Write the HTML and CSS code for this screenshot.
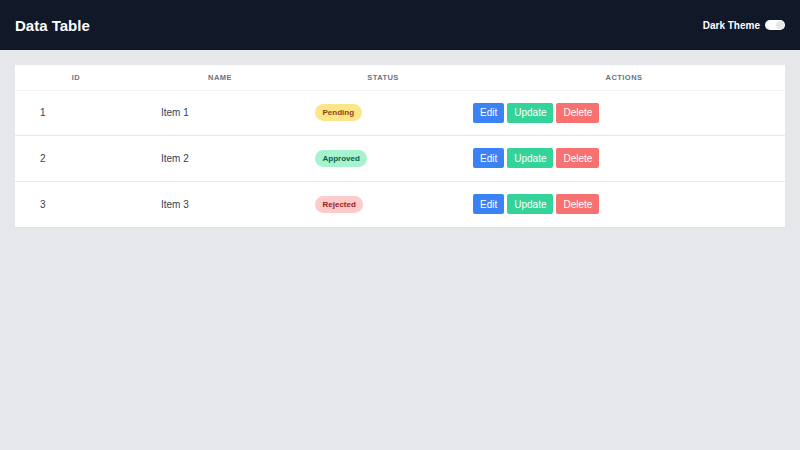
FILE: index.html
```html
<!DOCTYPE html>
<html lang="en">
<head>
<meta charset="utf-8">
<title>Data Table</title>
<link rel="stylesheet" href="styles.css">
</head>
<body>
<header class="topbar">
  <h1 class="title">Data Table</h1>
  <div class="theme">
    <span class="theme-label">Dark Theme</span>
    <span class="toggle"><span class="knob"></span></span>
  </div>
</header>
<main class="content">
  <div class="card">
    <table class="table">
      <colgroup>
        <col class="c-id"><col class="c-name"><col class="c-status"><col class="c-actions">
      </colgroup>
      <thead>
        <tr><th>ID</th><th>Name</th><th>Status</th><th>Actions</th></tr>
      </thead>
      <tbody>
        <tr>
          <td class="td-id">1</td>
          <td class="td-name">Item 1</td>
          <td class="td-status"><span class="pill pending">Pending</span></td>
          <td class="td-actions"><div class="btns"><button class="btn edit">Edit</button><button class="btn update">Update</button><button class="btn delete">Delete</button></div></td>
        </tr>
        <tr>
          <td class="td-id">2</td>
          <td class="td-name">Item 2</td>
          <td class="td-status"><span class="pill approved">Approved</span></td>
          <td class="td-actions"><div class="btns"><button class="btn edit">Edit</button><button class="btn update">Update</button><button class="btn delete">Delete</button></div></td>
        </tr>
        <tr>
          <td class="td-id">3</td>
          <td class="td-name">Item 3</td>
          <td class="td-status"><span class="pill rejected">Rejected</span></td>
          <td class="td-actions"><div class="btns"><button class="btn edit">Edit</button><button class="btn update">Update</button><button class="btn delete">Delete</button></div></td>
        </tr>
      </tbody>
    </table>
  </div>
</main>
</body>
</html>
```
FILE: styles.css
```css
* { box-sizing: border-box; }
html, body { margin: 0; padding: 0; }
body {
  background: #e5e7eb;
  font-family: "Liberation Sans", Arial, sans-serif;
  color: #374151;
  height: 450px;
}
.topbar {
  height: 50px;
  background: #111827;
  display: flex;
  align-items: center;
  justify-content: space-between;
  padding: 0 15px;
}
.title {
  margin: 0;
  font-size: 15px;
  font-weight: 700;
  color: #ffffff;
}
.theme {
  display: flex;
  align-items: center;
  gap: 5px;
}
.theme-label {
  color: #ffffff;
  font-size: 10px;
  font-weight: 700;
}
.toggle {
  width: 20px;
  height: 10px;
  border-radius: 5px;
  background: #ffffff;
  display: flex;
  justify-content: flex-end;
  align-items: center;
  padding: 1px;
}
.knob {
  width: 8px;
  height: 8px;
  border-radius: 50%;
  background: #e5e7eb;
}
.content {
  padding: 15px;
}
.card {
  background: #ffffff;
  box-shadow: 0 1px 1px rgba(0,0,0,0.03);
}
.table {
  width: 100%;
  border-collapse: collapse;
  table-layout: fixed;
}
.c-id { width: 122px; }
.c-name { width: 166px; }
.c-status { width: 160px; }
.c-actions { width: 322px; }
.table th {
  height: 25px;
  padding: 0;
  text-align: center;
  font-size: 7.5px;
  font-weight: 700;
  letter-spacing: 0.06em;
  text-transform: uppercase;
  color: #6b7280;
  border-bottom: 1px solid #f3f4f6;
}
.table td {
  height: 45.5px;
  padding: 0;
  font-size: 10px;
  color: #374151;
  border-bottom: 1px solid #e5e7eb;
  vertical-align: middle;
}
.table tbody tr:last-child td { border-bottom: none; }
.td-id { padding-left: 25px !important; }
.td-name { padding-left: 24px !important; }
.td-status { padding-left: 12px !important; }
.td-actions { padding-left: 10px !important; }
.pill {
  display: inline-block;
  height: 17px;
  line-height: 17px;
  padding: 0 7.5px;
  border-radius: 9px;
  font-size: 8px;
  font-weight: 700;
}
.pending { background: #fde68a; color: #92400e; }
.approved { background: #a7f3d0; color: #065f46; }
.rejected { background: #fecaca; color: #991b1b; }
.btns {
  display: flex;
  gap: 3px;
}
.btn {
  height: 20px;
  padding: 0 7px;
  border: none;
  border-radius: 2px;
  font-family: "Liberation Sans", Arial, sans-serif;
  font-size: 10px;
  color: #ffffff;
  cursor: pointer;
}
.edit { background: #3b82f6; }
.update { background: #34d399; }
.delete { background: #f87171; }
```
